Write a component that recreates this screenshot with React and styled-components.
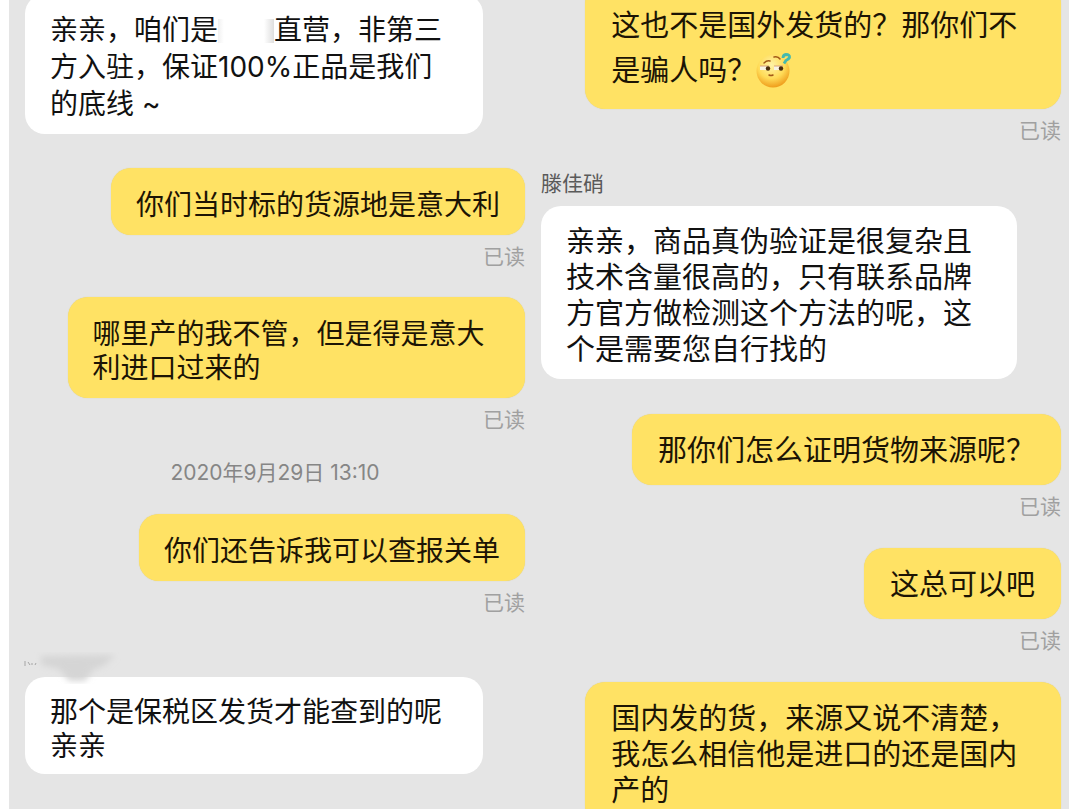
import React from "react";
import styled, { createGlobalStyle } from "styled-components";

const GlobalStyle = createGlobalStyle`
  * {
    box-sizing: border-box;
  }

  body {
    margin: 0;
    background-color: white;
    font-family: Inter, "Noto Sans CJK SC", sans-serif;
  }
`;

const Page = styled.main`
  display: grid;
  grid-template-columns: 521fr 539fr;
  height: 100vh;
  padding: 0 11px 0 9px;
  overflow: hidden;
`;

const Chat = styled.section`
  display: flex;
  flex-direction: column;
  min-width: 0;
  background-color: #e5e5e5;
`;

/* older messages are scrolled out above the top edge */
const LeftChat = styled(Chat)`
  gap: 28px;
  margin-top: -6px;
  padding: 0 5px 0 16px;
  font-size: 28px;
  line-height: 34px;
`;

const RightChat = styled(Chat)`
  gap: 29px;
  margin-top: -16px;
  padding: 0 8px 0 11px;
  font-size: 29px;
  line-height: 36px;
`;

const Message = styled.article`
  display: flex;
  flex-direction: column;
  align-items: ${(props) => (props.$mine ? "flex-end" : "flex-start")};
  margin-bottom: ${(props) => (props.$mine ? "0" : "6px")};
`;

const Bubble = styled.p`
  position: relative;
  width: ${(props) => (props.$wide ? "91.5%" : "auto")};
  max-width: 91.5%;
  margin: 0;
  border-radius: 20px;
  color: #111111;
`;

const TheirBubble = styled(Bubble)`
  padding: 18px 25px 11px;
  background-color: white;
  line-height: ${(props) => (props.$loose ? "37px" : "inherit")};
`;

const MyBubble = styled(Bubble)`
  padding: ${(props) => (props.$tall ? "19px 26px 16px" : "20px 25px 13px")};
  background-color: #ffe264;
  box-shadow: 0 0 1px #d8c880;
  line-height: ${(props) => (props.$loose ? "45px" : "inherit")};
  color: #1c1404;
`;

const Read = styled.small`
  margin-top: 10px;
  font-size: 21px;
  line-height: 24px;
  color: #a0a0a0;
`;

const Name = styled.header`
  position: relative;
  height: 24px;
  margin-bottom: 10px;
  font-size: 21px;
  line-height: 24px;
  color: #5a5a5a;
`;

const Time = styled.time`
  align-self: center;
  font-size: 21px;
  line-height: 26px;
  color: #868686;
`;

const Erased = styled.span`
  display: inline-block;
  width: 56px;
  height: 24px;
  vertical-align: -3px;
  background: linear-gradient(
    to right,
    #f1f1f1,
    white 6px,
    white 46px,
    #dedede
  );
`;

const Smudge = styled.svg`
  position: absolute;
  z-index: 1;
  top: 0;
  left: -2px;
`;

const Emoji = styled.svg`
  width: 36px;
  height: 36px;
  vertical-align: -8px;
`;

function DoubtFace() {
  return (
    <Emoji viewBox="0 0 36 36" role="img" aria-label="疑问">
      <defs>
        <radialGradient id="face" cx="45%" cy="32%" r="68%">
          <stop offset="0" stopColor="#fff3a8" />
          <stop offset="0.6" stopColor="#ffdb57" />
          <stop offset="1" stopColor="#ef9d1c" />
        </radialGradient>
      </defs>
      <circle cx="17" cy="18" r="16.500" fill="url(#face)" />
      <path d="M4 15h8M18 15h8" stroke="#f9f4e4" strokeWidth="4" />
      <path d="M4 13h9M18 13h9" stroke="#dba078" strokeWidth="1" />
      <circle cx="12" cy="15.500" r="2.200" fill="#4b2c0c" />
      <circle cx="25" cy="15.500" r="2.200" fill="#4b2c0c" />
      <path
        d="M8 10q3-3 6-2M18 4q4-1 6 2M13 22q2 1 4 0"
        fill="none"
        stroke="#a35a18"
        strokeWidth="1.500"
        strokeLinecap="round"
      />
      <path
        d="M27 5q0-3 3-3.500q4 0 3.500 3q-1 2-3.500 3l-2 3"
        fill="none"
        stroke="#45b9ae"
        strokeWidth="2.800"
      />
    </Emoji>
  );
}

function HiddenName() {
  return (
    <Smudge width="130" height="50" viewBox="0 0 130 50" aria-hidden="true">
      <defs>
        <filter id="soft">
          <feGaussianBlur stdDeviation="3" />
        </filter>
      </defs>
      <path
        d="M18 13L92 12L82 22L70 27L62 38L46 38L36 26L18 22Z"
        fill="#d5d5d5"
        filter="url(#soft)"
      />
      <path
        d="M2 18v5M5 19l2 3M9 20v2M13 20l-1 2"
        stroke="#a5a5a5"
        strokeWidth="1"
      />
    </Smudge>
  );
}

function Mine({ children, unseen, ...rest }) {
  return (
    <Message $mine>
      <MyBubble {...rest}>{children}</MyBubble>
      {!unseen && <Read>已读</Read>}
    </Message>
  );
}

function App() {
  return (
    <>
      <GlobalStyle />
      <Page>
        <LeftChat>
          <Message>
            <TheirBubble $wide $loose>
              亲亲，咱们是
              <Erased />
              直营，非第三
              <br />
              方入驻，保证100%正品是我们
              <br />
              的底线 ~
            </TheirBubble>
          </Message>
          <Mine>你们当时标的货源地是意大利</Mine>
          <Mine>哪里产的我不管，但是得是意大利进口过来的</Mine>
          <Time dateTime="2020-09-29T13:10">2020年9月29日 13:10</Time>
          <Mine>你们还告诉我可以查报关单</Mine>
          <Message>
            <Name>
              <HiddenName />
            </Name>
            <TheirBubble>那个是保税区发货才能查到的呢亲亲</TheirBubble>
          </Message>
        </LeftChat>
        <RightChat>
          <Mine $tall $loose>
            这也不是国外发货的？那你们不是骗人吗？
            <DoubtFace />
          </Mine>
          <Message>
            <Name>滕佳硝</Name>
            <TheirBubble>
              亲亲，商品真伪验证是很复杂且技术含量很高的，只有联系品牌方官方做检测这个方法的呢，这个是需要您自行找的
            </TheirBubble>
          </Message>
          <Mine $tall>那你们怎么证明货物来源呢？</Mine>
          <Mine $tall>这总可以吧</Mine>
          <Mine $tall unseen>
            国内发的货，来源又说不清楚，我怎么相信他是进口的还是国内产的
          </Mine>
        </RightChat>
      </Page>
    </>
  );
}

export default App;
